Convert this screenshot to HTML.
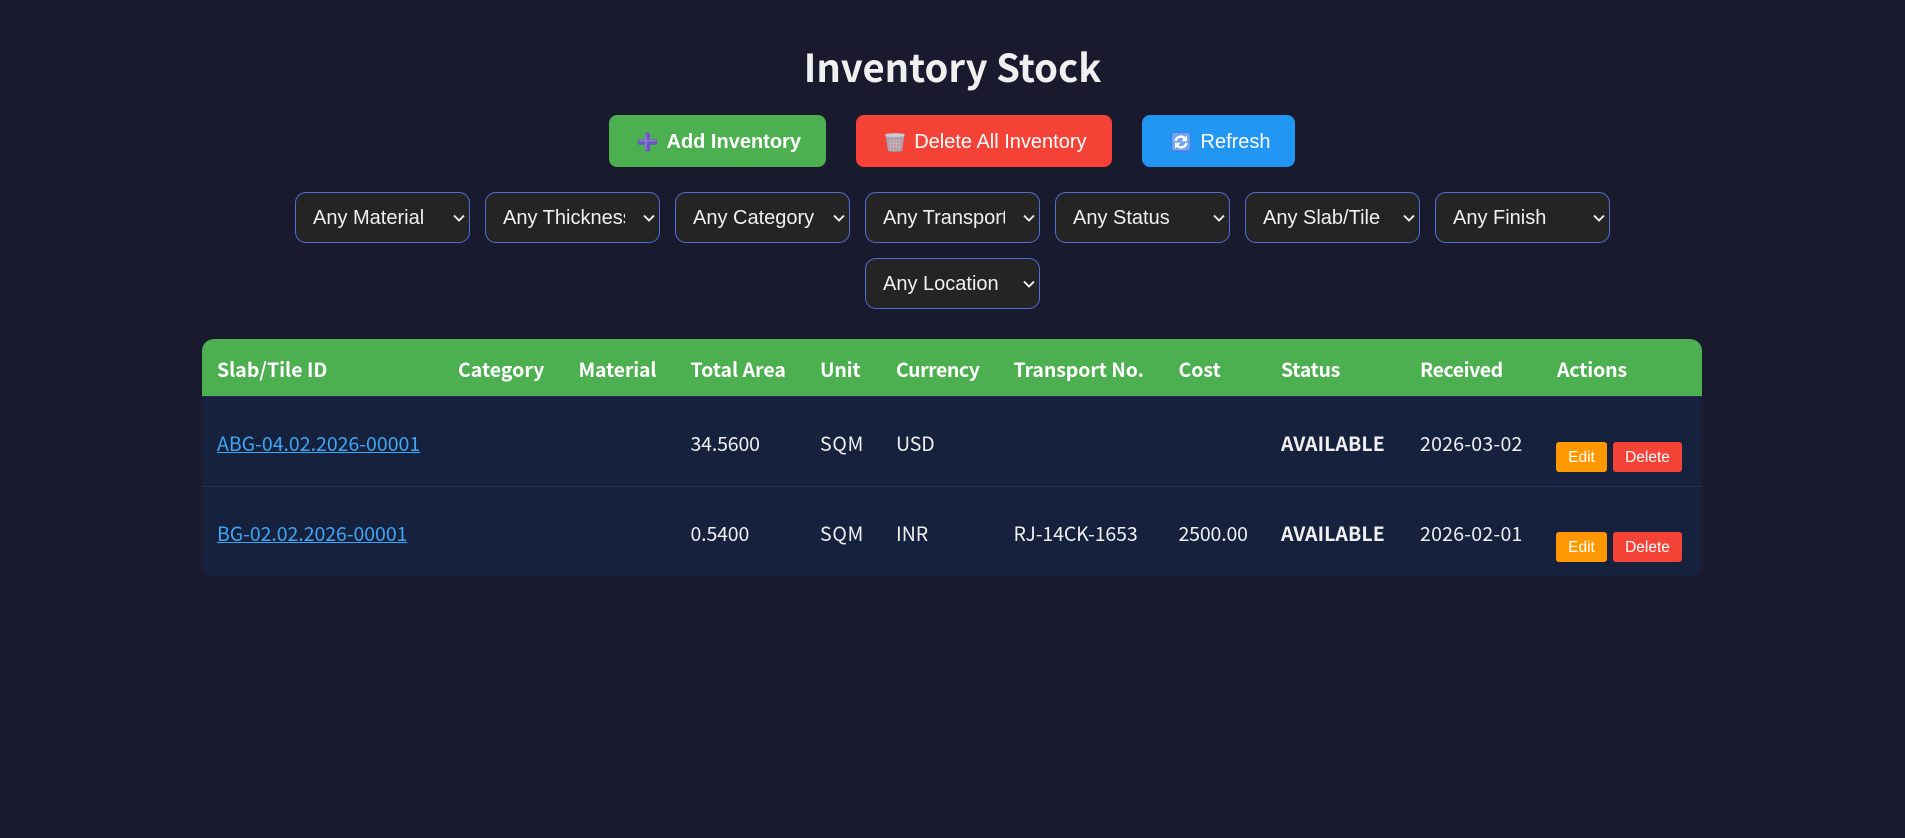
<!DOCTYPE html>
<html lang="en">
<head>
<meta charset="utf-8">
<title>Inventory Stock</title>
<style>
html,body{margin:0;padding:0;width:1905px;height:838px;overflow:hidden;background:#1a1a2e;}
body{position:relative;font-family:"Liberation Sans",sans-serif;color:#f0f0f0;}
.t{position:absolute;white-space:nowrap;line-height:30px;font-family:"Noto Sans CJK JP","Liberation Sans",sans-serif;font-size:19.5px;color:#f0f0f0;}
.h{font-weight:700;color:#fff;}
h1{position:absolute;margin:0;left:0;width:1905px;top:37px;text-align:center;line-height:60px;font-size:38.2px;font-weight:700;color:#f0f0f0;font-family:"Noto Sans CJK JP","Liberation Sans",sans-serif;}
.b{position:absolute;top:115px;height:52px;border-radius:8px;}
.bt{position:absolute;top:116px;line-height:52px;font-size:20px;color:#fff;white-space:nowrap;font-family:"Liberation Sans",sans-serif;}
select{position:absolute;box-sizing:border-box;width:175px;height:51px;background:#242424;color:#f0f0f0;border:1px solid #4f6fd6;border-radius:11px;padding:0 34px 0 17px;font:20px "Liberation Sans",sans-serif;outline:none;appearance:none;-webkit-appearance:none;}
.c{position:absolute;}
#tb{position:absolute;left:202px;top:339px;width:1500px;height:238px;border-radius:12px;overflow:hidden;background:#16213e;}
#hd{position:absolute;left:0;top:0;width:1500px;height:58px;background:#4caf50;border-bottom:1px solid #2a2a52;box-sizing:border-box;}
#ln{position:absolute;left:0;top:147px;width:1500px;height:1px;background:#2a2a52;}
a{color:#3ea6f5;text-decoration:underline;}
.sb{position:absolute;height:30px;border-radius:3px;color:#fff;text-align:center;font:15.5px/31px "Liberation Sans",sans-serif;}
</style>
</head>
<body>
<h1>Inventory Stock</h1>

<div class="b" style="left:609px;width:217px;background:#4caf50"></div>
<svg style="position:absolute;left:637px;top:132px" width="21" height="20" viewBox="0 0 21 20"><path d="M8 1.200Q10.500-.4 13 1.200V7.200H19.500Q21 10 19.500 12.800H13V18.800Q10.500 20.400 8 18.800V12.800H1.500Q0 10 1.500 7.200H8Z" fill="#6b55c0"/><path d="M9 2V18M2 8.600H19" stroke="#8f7bdd" stroke-width="1.500" fill="none"/></svg>
<div class="bt" style="left:666.500px;font-weight:700">Add Inventory</div>

<div class="b" style="left:856px;width:256px;background:#f44336"></div>
<svg style="position:absolute;left:885px;top:132px" width="20" height="20" viewBox="0 0 20 20"><path d="M.5 2Q10 .5 19.500 2L17 19Q10 20.500 3 19Z" fill="#a3a9b2"/><path d="M3 5.500Q10 6.800 17 5.500L15.600 17.500Q10 18.600 4.400 17.500Z" fill="#c98a93"/><path d="M5.800 6V18M8.600 6.300V18.300M11.400 6.300V18.300M14.200 6V18M3.500 8.800H16.500M3.800 11.600H16.200M4 14.400H16" stroke="#b4b9c1" stroke-width="1.100" fill="none"/><path d="M.5 2Q10 .5 19.500 2V4.200Q10 6 .5 4.200Z" fill="#c9ced4"/></svg>
<div class="bt" style="left:914.200px">Delete All Inventory</div>

<div class="b" style="left:1142px;width:153px;background:#2196f3"></div>
<svg style="position:absolute;left:1171px;top:132px" width="20" height="20" viewBox="0 0 20 20"><rect x="0" y="0" width="20" height="20" rx="3" fill="#4a7be0"/><rect x="1" y="1" width="18" height="17.500" rx="2.500" fill="#6ea4f0"/><path d="M4.500 9A5.500 5.500 0 0 1 14 6.500" stroke="#fff" stroke-width="2.400" fill="none"/><path d="M16 3.200V9.200H10.200Z" fill="#fff"/><path d="M15.500 11A5.500 5.500 0 0 1 6 13.500" stroke="#fff" stroke-width="2.400" fill="none"/><path d="M4 16.800V10.800H9.800Z" fill="#fff"/></svg>
<div class="bt" style="left:1200.500px">Refresh</div>

<select style="left:295px;top:192px"><option>Any Material</option></select>
<select style="left:485px;top:192px"><option>Any Thickness</option></select>
<select style="left:675px;top:192px"><option>Any Category</option></select>
<select style="left:865px;top:192px"><option>Any Transport</option></select>
<select style="left:1055px;top:192px"><option>Any Status</option></select>
<select style="left:1245px;top:192px"><option>Any Slab/Tile</option></select>
<select style="left:1435px;top:192px"><option>Any Finish</option></select>
<select style="left:865px;top:258px"><option>Any Location</option></select>

<svg class="c" style="left:453px;top:214px" width="12" height="8" viewBox="0 0 12 8"><path d="M1 1.500L6 6.500L11 1.500" stroke="#f0f0f0" stroke-width="1.900" fill="none"/></svg>
<svg class="c" style="left:643px;top:214px" width="12" height="8" viewBox="0 0 12 8"><path d="M1 1.500L6 6.500L11 1.500" stroke="#f0f0f0" stroke-width="1.900" fill="none"/></svg>
<svg class="c" style="left:833px;top:214px" width="12" height="8" viewBox="0 0 12 8"><path d="M1 1.500L6 6.500L11 1.500" stroke="#f0f0f0" stroke-width="1.900" fill="none"/></svg>
<svg class="c" style="left:1023px;top:214px" width="12" height="8" viewBox="0 0 12 8"><path d="M1 1.500L6 6.500L11 1.500" stroke="#f0f0f0" stroke-width="1.900" fill="none"/></svg>
<svg class="c" style="left:1213px;top:214px" width="12" height="8" viewBox="0 0 12 8"><path d="M1 1.500L6 6.500L11 1.500" stroke="#f0f0f0" stroke-width="1.900" fill="none"/></svg>
<svg class="c" style="left:1403px;top:214px" width="12" height="8" viewBox="0 0 12 8"><path d="M1 1.500L6 6.500L11 1.500" stroke="#f0f0f0" stroke-width="1.900" fill="none"/></svg>
<svg class="c" style="left:1593px;top:214px" width="12" height="8" viewBox="0 0 12 8"><path d="M1 1.500L6 6.500L11 1.500" stroke="#f0f0f0" stroke-width="1.900" fill="none"/></svg>
<svg class="c" style="left:1023px;top:280px" width="12" height="8" viewBox="0 0 12 8"><path d="M1 1.500L6 6.500L11 1.500" stroke="#f0f0f0" stroke-width="1.900" fill="none"/></svg>

<div id="tb"><div id="hd"></div><div id="ln"></div></div>

<div class="t h" style="left:217px;top:353.500px">Slab/Tile ID</div>
<div class="t h" style="left:458px;top:353.500px">Category</div>
<div class="t h" style="left:578.500px;top:353.500px;letter-spacing:-.15px">Material</div>
<div class="t h" style="left:690.500px;top:353.500px">Total Area</div>
<div class="t h" style="left:820px;top:353.500px;letter-spacing:-.2px">Unit</div>
<div class="t h" style="left:896px;top:353.500px;letter-spacing:-.45px">Currency</div>
<div class="t h" style="left:1013.500px;top:353.500px;letter-spacing:-.1px">Transport No.</div>
<div class="t h" style="left:1178.500px;top:353.500px">Cost</div>
<div class="t h" style="left:1281px;top:353.500px;letter-spacing:-.3px">Status</div>
<div class="t h" style="left:1420px;top:353.500px;letter-spacing:-.45px">Received</div>
<div class="t h" style="left:1557px;top:353.500px;letter-spacing:-.15px">Actions</div>

<div class="t" style="left:217px;top:428px"><a>ABG-04.02.2026-00001</a></div>
<div class="t" style="left:690.500px;top:428px;letter-spacing:-.15px">34.5600</div>
<div class="t" style="left:820px;top:428px;letter-spacing:.7px">SQM</div>
<div class="t" style="left:896px;top:428px;letter-spacing:-.1px">USD</div>
<div class="t" style="left:1281px;top:428px;font-weight:700;letter-spacing:.1px">AVAILABLE</div>
<div class="t" style="left:1420px;top:428px;letter-spacing:.25px">2026-03-02</div>
<div class="sb" style="left:1556px;top:442px;width:51px;background:#ff9800">Edit</div>
<div class="sb" style="left:1613px;top:442px;width:69px;background:#f44336">Delete</div>

<div class="t" style="left:217px;top:518px"><a style="letter-spacing:-.05px">BG-02.02.2026-00001</a></div>
<div class="t" style="left:690.500px;top:518px;letter-spacing:-.15px">0.5400</div>
<div class="t" style="left:820px;top:518px;letter-spacing:.7px">SQM</div>
<div class="t" style="left:896px;top:518px">INR</div>
<div class="t" style="left:1013.500px;top:518px;letter-spacing:-.1px">RJ-14CK-1653</div>
<div class="t" style="left:1178.500px;top:518px;letter-spacing:-.15px">2500.00</div>
<div class="t" style="left:1281px;top:518px;font-weight:700;letter-spacing:.1px">AVAILABLE</div>
<div class="t" style="left:1420px;top:518px;letter-spacing:.25px">2026-02-01</div>
<div class="sb" style="left:1556px;top:532px;width:51px;background:#ff9800">Edit</div>
<div class="sb" style="left:1613px;top:532px;width:69px;background:#f44336">Delete</div>
</body>
</html>
